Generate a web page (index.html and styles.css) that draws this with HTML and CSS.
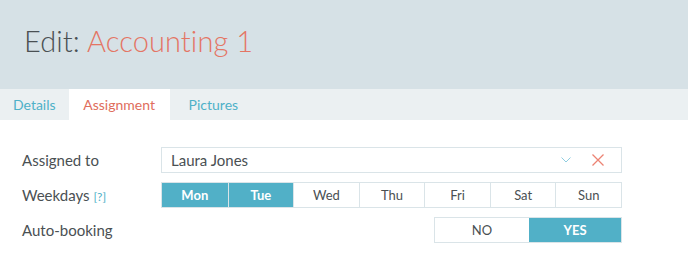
FILE: index.html
```html
<!DOCTYPE html>
<html lang="en">
<head>
  <meta charset="UTF-8">
  <title>Edit: Accounting 1</title>
  <link rel="stylesheet" href="styles.css">
</head>
<body>
  <header class="page-head">
    <h1>Edit: <span class="name">Accounting 1</span></h1>
  </header>

  <nav class="tabs">
    <a class="tab">Details</a>
    <a class="tab active">Assignment</a>
    <a class="tab">Pictures</a>
  </nav>

  <section class="form">
    <div class="row">
      <label class="label">Assigned to</label>
      <div class="select">
        <span class="value">Laura Jones</span>
        <svg class="chevron" width="10" height="6" viewBox="0 0 10 6"><path d="M0.5 0.5 L5 5 L9.5 0.5" fill="none" stroke="#8fcde0" stroke-width="1"/></svg>
        <svg class="clear" width="12" height="12" viewBox="0 0 12 12"><path d="M0.5 0.5 L11.5 11.5 M11.5 0.5 L0.5 11.5" fill="none" stroke="#ec8373" stroke-width="1.3"/></svg>
      </div>
    </div>

    <div class="row">
      <label class="label">Weekdays <span class="help">[?]</span></label>
      <div class="days">
        <span class="day on">Mon</span>
        <span class="day on">Tue</span>
        <span class="day">Wed</span>
        <span class="day">Thu</span>
        <span class="day">Fri</span>
        <span class="day">Sat</span>
        <span class="day">Sun</span>
      </div>
    </div>

    <div class="row">
      <label class="label">Auto-booking</label>
      <div class="toggle">
        <span class="opt">NO</span>
        <span class="opt on">YES</span>
      </div>
    </div>
  </section>
</body>
</html>
```

FILE: styles.css
```css
body {
  margin: 0;
  font-family: "Lato", "Open Sans", sans-serif;
  color: #4a5053;
  background-color: #fff;
}
.page-head {
  background-color: #d6e1e6;
  height: 89px;
  padding: 0 24px;
  box-sizing: border-box;
  display: flex;
  align-items: center;
}
.page-head h1 {
  margin: 0 0 9px;
  font-size: 29px;
  font-weight: 300;
  color: #4a5053;
  letter-spacing: 0.1px;
}
.page-head .name {
  color: #e47564;
}
.tabs {
  display: flex;
  height: 31px;
  background-color: #ebf0f2;
}
.tab {
  display: flex;
  align-items: center;
  padding: 0 13px;
  font-size: 14px;
  color: #4eb1c8;
}
.tab.active {
  background-color: #fff;
  color: #e06d5c;
  width: 101px;
  padding: 0;
  box-sizing: border-box;
  justify-content: center;
}
.tabs .tab:last-child {
  padding-left: 19px;
}
.form {
  padding: 27px 66px 0 22px;
}
.row {
  display: flex;
  align-items: center;
  margin-bottom: 9px;
}
.label {
  width: 139px;
  font-size: 15px;
  color: #4a5053;
}
.help {
  font-size: 12px;
  color: #4eb1c8;
}
.select {
  flex: 1;
  height: 26px;
  border: 1px solid #dae4e8;
  display: flex;
  align-items: center;
  padding: 0 17px 0 9px;
  box-sizing: border-box;
}
.select .value {
  flex: 1;
  font-size: 15px;
  color: #4a5053;
}
.chevron {
  margin-right: 21px;
}
.days {
  flex: 1;
  display: grid;
  grid-template-columns: repeat(7, 1fr);
  border: 1px solid #dae4e8;
  height: 26px;
  box-sizing: border-box;
}
.day {
  display: flex;
  align-items: center;
  justify-content: center;
  font-size: 13px;
  color: #4a5053;
  border-left: 1px solid #dae4e8;
}
.day:first-child {
  border-left: none;
}
.day.on {
  background-color: #51b0c7;
  color: #fff;
  font-weight: 700;
}
.toggle {
  margin-left: auto;
  display: grid;
  grid-template-columns: 94px 92px;
  height: 26px;
  border: 1px solid #dae4e8;
  box-sizing: border-box;
}
.opt {
  display: flex;
  align-items: center;
  justify-content: center;
  font-size: 13px;
  color: #4a5053;
}
.opt.on {
  background-color: #51b0c7;
  color: #fff;
  font-weight: 700;
}
```
